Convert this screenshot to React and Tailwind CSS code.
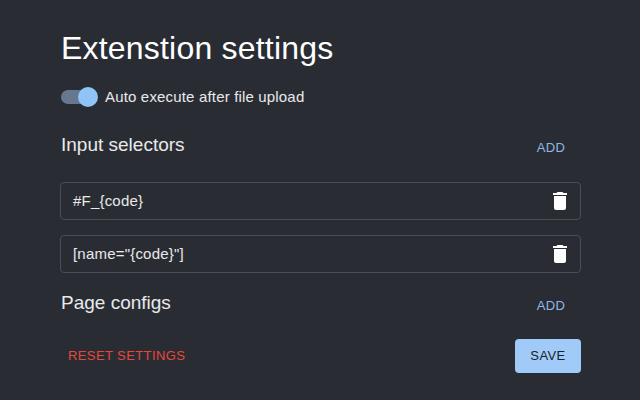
function DeleteIcon() {
  return (
    <svg viewBox="0 0 24 24" className="w-6 h-6 fill-white">
      <path d="M6 19c0 1.1.9 2 2 2h8c1.1 0 2-.9 2-2V7H6v12zM19 4h-3.5l-1-1h-5l-1 1H5v2h14V4z" />
    </svg>
  );
}

function SelectorInput({ value }) {
  return (
    <div className="h-[38px] flex items-center justify-between pl-3 pr-[8px] border border-[#4a4d53] rounded text-[15px] tracking-[0.2px] text-white/90">
      <span>{value}</span>
      <DeleteIcon />
    </div>
  );
}

function SectionHeader({ title }) {
  return (
    <div className="flex items-start justify-between">
      <h2 className="ml-px text-[19px] leading-[24px] text-white/90">{title}</h2>
      <button className="w-[60px] h-[30px] text-[13px] tracking-[0.35px] text-[#8fb8e6] text-center">ADD</button>
    </div>
  );
}

export default function App() {
  const selectors = ['#F_{code}', '[name="{code}"]'];

  return (
    <div className="w-[640px] h-[400px] overflow-hidden bg-[#292c33] text-white font-['Liberation_Sans',sans-serif]">
      <div className="w-[521px] ml-[60px] pt-[27px]">
        <h1 className="ml-px text-[32px] leading-[42px] tracking-[0.2px]">Extenstion settings</h1>

        <div className="flex items-center gap-[8px] mt-[16px] h-[24px]">
          <div className="relative w-[36px] h-[14px] ml-[1px] rounded-full bg-[#66788f] flex items-center justify-end">
            <div className="w-[20px] h-[20px] rounded-full bg-[#90c4f7] -mr-[1px]" />
          </div>
          <span className="text-[15px] tracking-[0.17px] text-white/90">Auto execute after file upload</span>
        </div>

        <div className="mt-[24px]">
          <SectionHeader title="Input selectors" />
        </div>

        <div className="flex flex-col gap-[15px] mt-[19px]">
          {selectors.map((s) => (
            <SelectorInput key={s} value={s} />
          ))}
        </div>

        <div className="mt-[18px]">
          <SectionHeader title="Page configs" />
        </div>

        <div className="flex items-center justify-between mt-[18px]">
          <button className="h-[34px] px-2 text-[13px] tracking-[0.4px] text-[#e8473a]">RESET SETTINGS</button>
          <button className="w-[66px] h-[34px] rounded bg-[#a0cbf8] text-[13px] tracking-[0.4px] text-[#1c2028]">SAVE</button>
        </div>
      </div>
    </div>
  );
}
